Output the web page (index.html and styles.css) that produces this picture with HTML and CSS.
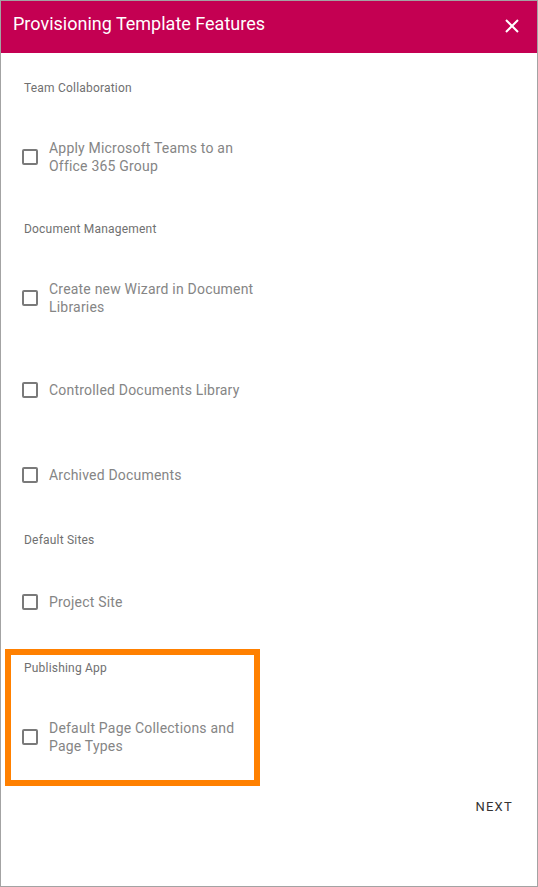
FILE: index.html
```html
<!DOCTYPE html>
<html lang="en">
<head>
<meta charset="utf-8">
<title>Provisioning Template Features</title>
<link rel="stylesheet" href="styles.css">
</head>
<body>
<div class="dialog">
  <header class="dialog-header">
    <h1 class="dialog-title">Provisioning Template Features</h1>
    <button class="close-btn" aria-label="Close">
      <svg width="14" height="14" viewBox="0 0 14 14"><path d="M1 1 L13 13 M13 1 L1 13" stroke="#fff" stroke-width="2" fill="none"/></svg>
    </button>
  </header>
  <div class="dialog-content">
    <section class="section">
      <div class="section-label">Team Collaboration</div>
      <label class="item multi"><span class="checkbox"></span><span class="item-text">Apply Microsoft Teams to an Office 365 Group</span></label>
    </section>
    <section class="section">
      <div class="section-label">Document Management</div>
      <label class="item multi"><span class="checkbox"></span><span class="item-text">Create new Wizard in Document Libraries</span></label>
      <label class="item"><span class="checkbox"></span><span class="item-text">Controlled Documents Library</span></label>
      <label class="item"><span class="checkbox"></span><span class="item-text">Archived Documents</span></label>
    </section>
    <section class="section">
      <div class="section-label">Default Sites</div>
      <label class="item"><span class="checkbox"></span><span class="item-text">Project Site</span></label>
    </section>
    <section class="section highlighted">
      <div class="section-label">Publishing App</div>
      <label class="item multi"><span class="checkbox"></span><span class="item-text">Default Page Collections and Page Types</span></label>
    </section>
  </div>
  <footer class="dialog-footer">
    <button class="next-btn">NEXT</button>
  </footer>
</div>
</body>
</html>
```
FILE: styles.css
```css
html, body {
  margin: 0;
  padding: 0;
  background: #fff;
}
body {
  font-family: Roboto, "Noto Sans", Arial, sans-serif;
}
.dialog {
  box-sizing: border-box;
  width: 538px;
  height: 887px;
  border: 1px solid #a3a3a3;
  display: flex;
  flex-direction: column;
  background: #fff;
}
.dialog-header {
  box-sizing: border-box;
  height: 52px;
  background: #c40052;
  display: flex;
  justify-content: space-between;
  align-items: flex-start;
  padding: 11px 18px 0 12px;
}
.dialog-title {
  margin: 0;
  font-size: 18px;
  line-height: 24px;
  font-weight: 400;
  color: #fff;
}
.close-btn {
  border: 0;
  background: transparent;
  padding: 0;
  margin-top: 7px;
  width: 14px;
  height: 14px;
  display: block;
  cursor: pointer;
}
.close-btn svg { display: block; }
.dialog-content {
  padding-top: 12px;
}
.section {
  padding-top: 15px;
}
.section.highlighted {
  position: relative;
  padding-top: 16px;
}
.section.highlighted::after {
  content: "";
  position: absolute;
  top: 5px;
  bottom: 0;
  left: 4px;
  width: 255px;
  box-sizing: border-box;
  border: 6px solid #ff8000;
  pointer-events: none;
}
.section-label {
  font-size: 12px;
  line-height: 16px;
  color: #707070;
  letter-spacing: 0.2px;
  padding-left: 23px;
  margin-bottom: 11px;
}
.item {
  display: flex;
  align-items: center;
  padding: 33.5px 0 33.5px 21px;
  cursor: pointer;
}
.item.multi {
  padding-top: 31.5px;
  padding-bottom: 31.5px;
}
.checkbox {
  box-sizing: border-box;
  flex: none;
  width: 16px;
  height: 16px;
  border: 2px solid #7a7a7a;
  border-radius: 2px;
  margin-right: 11px;
}
.item-text {
  width: 212px;
  font-size: 14px;
  line-height: 18px;
  color: #858585;
  letter-spacing: 0.2px;
}
.dialog-footer {
  display: flex;
  justify-content: flex-end;
  padding: 13px 24px 0 0;
}
.next-btn {
  border: 0;
  background: transparent;
  padding: 0;
  font-family: Roboto, "Noto Sans", Arial, sans-serif;
  font-size: 13px;
  line-height: 16px;
  font-weight: 400;
  letter-spacing: 1.25px;
  color: #333;
  cursor: pointer;
}
```
